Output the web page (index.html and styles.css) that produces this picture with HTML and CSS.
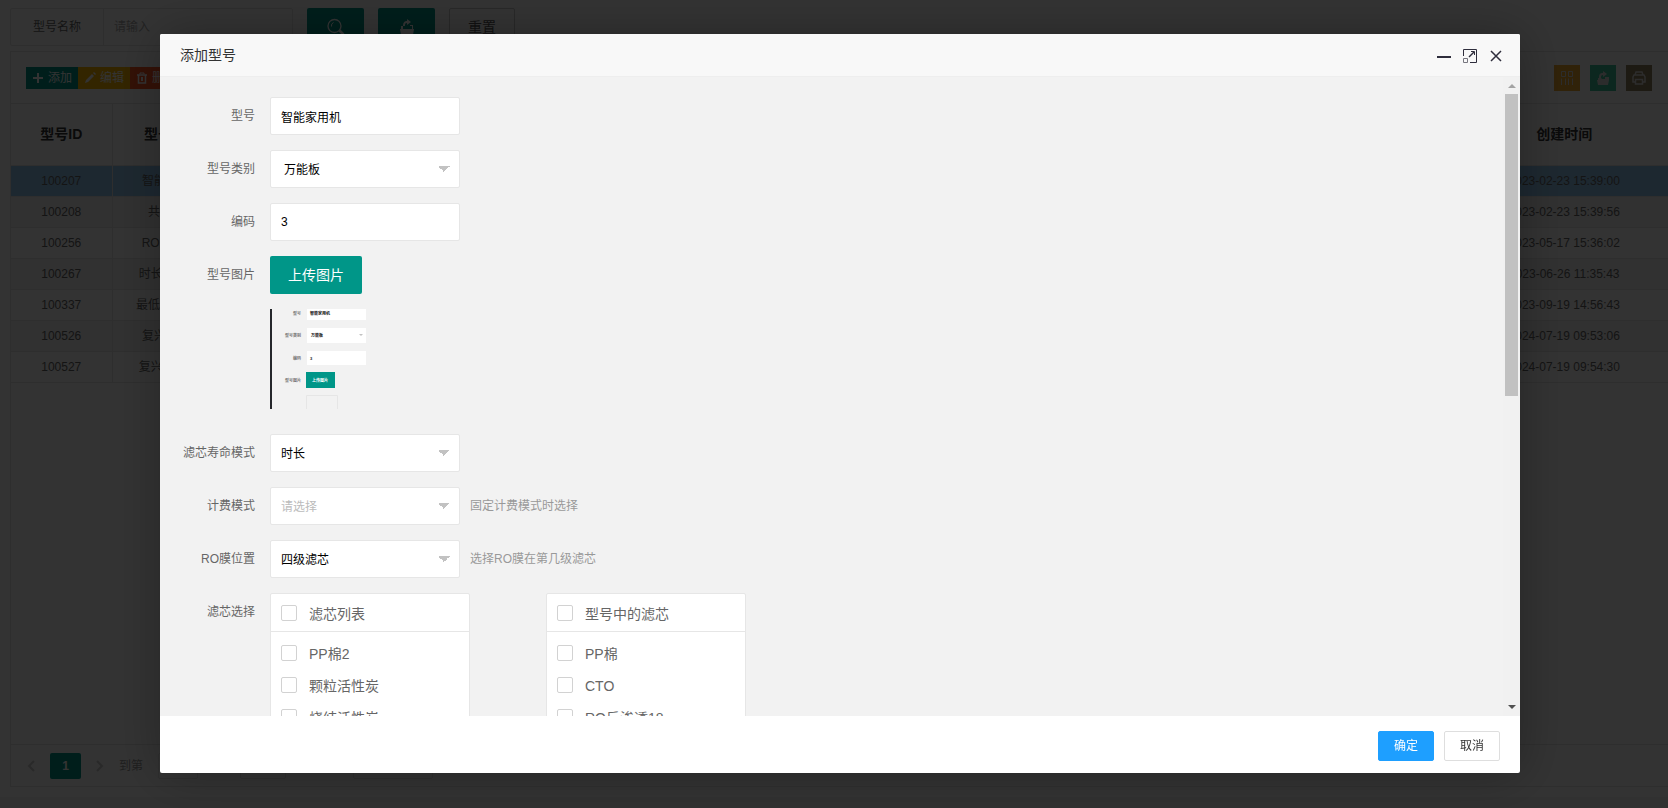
FILE: index.html
```
<!DOCTYPE html>
<html lang="zh-CN">
<head>
    <meta charset="UTF-8">
    <meta name="viewport" content="width=device-width, initial-scale=1.0">
    <title>添加型号</title>
    <link rel="stylesheet" href="styles.css">
</head>
<body>
    <div class="page">
        <form class="search">
            <div class="search-field">
                <label for="keyword">型号名称</label>
                <input type="text" id="keyword" placeholder="请输入">
            </div>
            <button type="button" class="btn" aria-label="搜索">
                <svg width="18" height="18" viewBox="0 0 18 18" fill="none" stroke="currentColor"><circle cx="7.500" cy="8" r="6.500" stroke-width="1.3"/><path d="M4.500 8.500a3.500 3.500 0 0 1 2-4"/><path d="M12.500 12.500l4 4" stroke-width="2.500"/></svg>
            </button>
            <button type="button" class="btn" aria-label="导出">
                <svg width="16" height="16" viewBox="0 0 16 16" fill="currentColor"><path d="M1 10h14l-1 6H2zM4 7c0-4 2-5 4-5V0l4 3-4 3V4C6 4 6 5 6 7zM2 7h2v3H2zM11 6h3v4h-1V7h-2z"/></svg>
            </button>
            <button type="reset" class="btn btn-plain">重置</button>
        </form>

        <div class="table-view">
            <div class="table-tool">
                <div class="tool-left">
                    <button class="btn-xs green"><svg width="12" height="12" viewBox="0 0 12 12" stroke="currentColor" stroke-width="2"><path d="M6 1v10M1 6h10"/></svg>添加</button>
                    <button class="btn-xs yellow"><svg width="12" height="12" viewBox="0 0 12 12" fill="currentColor"><path d="M1 11l1-3 6-6 2 2-6 6zM9 1l1-1 2 2-1 1z"/></svg>编辑</button>
                    <button class="btn-xs red"><svg width="12" height="12" viewBox="0 0 12 12" fill="none" stroke="currentColor"><path d="M4 2V1h4v1M5.500 5v4M6.500 5v4"/><path d="M1 3h10M2.500 3v8h7V3" stroke-width="1.500"/></svg>删除</button>
                </div>
                <div class="tool-right">
                    <button class="tool-icon orange" aria-label="筛选列"><svg width="14" height="14" viewBox="0 0 14 14" fill="none" stroke="currentColor"><path d="M1.500.5h4v5h-4zM8.500.5h4v5h-4zM1.500 7.500V14M5.500 7.500V14M8.500 7.500V14M12.500 7.500V14"/></svg></button>
                    <button class="tool-icon mint" aria-label="导出"><svg width="14" height="14" viewBox="0 0 14 14" fill="currentColor"><path d="M1 9h12l-1 5H2zM3 7c0-4 1-5 4-5V0l4 3-4 3V4C5 4 5 5 5 7zM2 7h3l1 1h3V6h4v3H2z"/></svg></button>
                    <button class="tool-icon brown" aria-label="打印"><svg width="14" height="14" viewBox="0 0 14 14" fill="none" stroke="currentColor" stroke-width="1.500"><path d="M3 4l1-3h6l1 3M3 11H1V6l1-2h10l1 2v5h-2M3.500 8.500h7v4.500h-7z"/></svg></button>
                </div>
            </div>
            <table>
                <colgroup><col class="col-id"><col class="col-name"><col><col class="col-time"></colgroup>
                <thead>
                    <tr><th>型号ID</th><th>型号名称</th><th></th><th>创建时间</th></tr>
                </thead>
                <tbody>
                    <tr class="active"><td>100207</td><td>智能家用机</td><td></td><td>2023-02-23 15:39:00</td></tr>
                    <tr><td>100208</td><td>共享机型</td><td></td><td>2023-02-23 15:39:56</td></tr>
                    <tr><td>100256</td><td>RO膜机型1</td><td></td><td>2023-05-17 15:36:02</td></tr>
                    <tr><td>100267</td><td>时长模式机1</td><td></td><td>2023-06-26 11:35:43</td></tr>
                    <tr><td>100337</td><td>最低消费机型</td><td></td><td>2023-09-19 14:56:43</td></tr>
                    <tr><td>100526</td><td>复兴家用机</td><td></td><td>2024-07-19 09:53:06</td></tr>
                    <tr><td>100527</td><td>复兴家用机1</td><td></td><td>2024-07-19 09:54:30</td></tr>
                </tbody>
            </table>
            <div class="pager">
                <button class="pager-arrow" aria-label="上一页"><svg width="8" height="12" viewBox="0 0 8 12" fill="none" stroke="currentColor" stroke-width="2"><path d="M7 1L2 6l5 5"/></svg></button>
                <button class="pager-current">1</button>
                <button class="pager-arrow" aria-label="下一页"><svg width="8" height="12" viewBox="0 0 8 12" fill="none" stroke="currentColor" stroke-width="2"><path d="M1 1l5 5-5 5"/></svg></button>
                <label for="page-no">到第</label>
                <input type="text" id="page-no" value="1">
                <span>页</span>
                <button class="pager-go">确定</button>
                <span>共 7 条</span>
                <select aria-label="每页条数"><option>10 条/页</option></select>
            </div>
        </div>
    </div>

    <div class="shade">
        <div class="dialog" role="dialog" aria-labelledby="dialog-title">
            <div class="dialog-title">
                <span id="dialog-title">添加型号</span>
                <div class="dialog-ctrl">
                    <button aria-label="最小化"><svg width="14" height="16" viewBox="0 0 14 16"><path d="M0 8h14v2H0z" fill="#2e2d3c"/></svg></button>
                    <button aria-label="最大化"><svg width="14" height="14" viewBox="0 0 14 14" fill="none" stroke="#2e2d3c"><path d="M.5 7V.5h13v13H7"/><path d="M6 8l5-5" stroke-width="1.500"/><path d="M8 2.500h3.500V6"/><path d="M.5 9.500h4v4h-4z" stroke="#77767f"/></svg></button>
                    <button aria-label="关闭"><svg width="14" height="14" viewBox="0 0 14 14" stroke="#2e2d3c" stroke-width="1.500"><path d="M2 2l10 10M12 2L2 12"/></svg></button>
                </div>
            </div>

            <div class="dialog-body">
                <form class="form">
                    <div class="form-item">
                        <label for="model">型号</label>
                        <input type="text" id="model" value="智能家用机">
                    </div>
                    <div class="form-item">
                        <label for="type">型号类别</label>
                        <select id="type" class="native"><option>万能板</option></select>
                    </div>
                    <div class="form-item">
                        <label for="code">编码</label>
                        <input type="text" id="code" value="3">
                    </div>
                    <div class="form-item">
                        <label for="upload">型号图片</label>
                        <div>
                            <button type="button" id="upload" class="btn">上传图片</button>
                            <svg class="preview" width="96" height="100" viewBox="0 0 96 100">
                                <path d="M0 0h2v100H0z" fill="#25272b"/>
                                <path d="M37 0h59v11H37zM37 19h59v15H37zM37 42h59v14H37z" fill="#fff"/>
                                <path d="M36 63h29v16H36z" fill="#009688"/>
                                <path d="M36.500 100V86.500h31V100" fill="none" stroke="#e6e6e6"/>
                                <path d="M89 25h4l-2 2z" fill="#c2c2c2"/>
                                <g class="preview-label"><text x="31" y="6">型号</text><text x="31" y="28">型号类别</text><text x="31" y="51">编码</text><text x="31" y="73">型号图片</text></g>
                                <g class="preview-value"><text x="40" y="6">智能家用机</text><text x="41" y="28">万能板</text><text x="40" y="51">3</text></g>
                                <text class="preview-btn" x="50" y="73">上传图片</text>
                            </svg>
                        </div>
                    </div>
                    <div class="form-item">
                        <label for="life">滤芯寿命模式</label>
                        <select id="life"><option>时长</option></select>
                    </div>
                    <div class="form-item">
                        <label for="billing">计费模式</label>
                        <select id="billing" class="empty"><option>请选择</option></select>
                        <span class="tip">固定计费模式时选择</span>
                    </div>
                    <div class="form-item">
                        <label for="position">RO膜位置</label>
                        <select id="position"><option>四级滤芯</option></select>
                        <span class="tip">选择RO膜在第几级滤芯</span>
                    </div>
                    <div class="form-item">
                        <span class="form-label">滤芯选择</span>
                        <div class="transfer">
                            <div class="transfer-box">
                                <label class="transfer-head"><input type="checkbox"><span>滤芯列表</span></label>
                                <div class="transfer-list">
                                    <label><input type="checkbox"><span>PP棉2</span></label>
                                    <label><input type="checkbox"><span>颗粒活性炭</span></label>
                                    <label><input type="checkbox"><span>烧结活性炭</span></label>
                                </div>
                            </div>
                            <div class="transfer-box">
                                <label class="transfer-head"><input type="checkbox"><span>型号中的滤芯</span></label>
                                <div class="transfer-list">
                                    <label><input type="checkbox"><span>PP棉</span></label>
                                    <label><input type="checkbox"><span>CTO</span></label>
                                    <label><input type="checkbox"><span>RO反渗透18</span></label>
                                </div>
                            </div>
                        </div>
                    </div>
                </form>
                <div class="scrollbar">
                    <span class="arrow-up"></span>
                    <span class="thumb"></span>
                    <span class="arrow-down"></span>
                </div>
            </div>

            <div class="dialog-footer">
                <button class="primary">确定</button>
                <button>取消</button>
            </div>
        </div>
    </div>
</body>
</html>
```
FILE: styles.css
```
* {
    box-sizing: border-box;
}

body {
    margin: 0;
    height: 100vh;
    overflow: hidden;
    background: #f2f2f2;
    color: #666;
    font: 12px/24px "Liberation Sans", "Noto Sans CJK SC", sans-serif;
}

button, input, select {
    font: inherit;
    margin: 0;
    border-radius: 2px;
}

button {
    display: inline-flex;
    align-items: center;
    justify-content: center;
    padding: 0;
    border: none;
    cursor: pointer;
}

input[type="text"], select {
    width: 190px;
    height: 38px;
    padding: 0 10px;
    border: 1px solid #e6e6e6;
    background: #fff;
    color: #000;
}

select {
    appearance: none;
}

/* list page */
.page {
    display: flex;
    flex-direction: column;
    height: calc(100vh - 11px);
    padding: 8px 0 10px 10px;
    background: #fff;
}

.search {
    display: flex;
    gap: 14px;
    margin-bottom: 5px;
}

.search-field {
    display: flex;
    width: 283px;
    border: 1px solid #e6e6e6;
    border-radius: 2px;
}

.search-field label {
    width: 94px;
    line-height: 36px;
    text-align: center;
    border-right: 1px solid #e6e6e6;
}

.search-field input[type="text"] {
    height: 36px;
    border: none;
}

input::placeholder {
    color: #aaa;
}

.btn {
    min-width: 57px;
    height: 38px;
    padding: 0 18px;
    background: #009688;
    color: #fff;
    font-size: 14px;
}

.btn-plain {
    border: 1px solid #c9c9c9;
    background: #fff;
    color: #555;
}

.table-view {
    display: flex;
    flex: 1;
    flex-direction: column;
    border: 1px solid #e6e6e6;
    border-right: none;
}

.table-tool {
    display: flex;
    justify-content: space-between;
    height: 51px;
    padding: 13px 16px 0 15px;
}

.tool-left {
    display: flex;
    padding-top: 2px;
}

.btn-xs {
    gap: 4px;
    width: 52px;
    height: 22px;
    border-radius: 0;
    color: #fff;
}

.green { background: #009688; }
.yellow { background: #ffb800; }
.red { background: #ff5722; }

.tool-right {
    display: flex;
    gap: 10px;
}

.tool-icon {
    width: 26px;
    height: 26px;
    border-radius: 0;
    color: #ddd;
}

.orange { background: #f0a830; }
.mint { background: #3fc09a; }
.brown { background: #90805f; }

table {
    width: 100%;
    table-layout: fixed;
    border-collapse: collapse;
}

.col-id { width: 101px; }
.col-name { width: 120px; }
.col-time { width: 208px; }

th, td {
    height: 31px;
    padding: 0;
    border: 1px solid #e6e6e6;
    border-width: 1px 0 1px 1px;
    text-align: center;
    white-space: nowrap;
}

th:first-child, td:first-child {
    border-left: none;
}

th {
    height: 62px;
    padding-bottom: 2px;
    font-size: 14px;
    font-weight: bold;
    color: #333;
}

tbody tr:nth-child(even) {
    background: #f2f2f2;
}

tbody tr.active {
    background: #93c8f0;
}

.pager {
    display: flex;
    align-items: center;
    gap: 15px;
    height: 42px;
    margin-top: auto;
    padding: 0 16px;
    border-top: 1px solid #e6e6e6;
    color: #999;
}

.pager-arrow {
    background: none;
    color: #ccc;
}

.pager-current {
    width: 31px;
    height: 26px;
    background: #009688;
    color: #fff;
    font-weight: bold;
}

.pager input[type="text"] {
    width: 40px;
    height: 26px;
}

.pager-go, .pager select {
    width: 46px;
    height: 26px;
    border: 1px solid #e6e6e6;
    background: #fff;
}

.pager select {
    width: 80px;
}

/* dialog */
.shade {
    position: fixed;
    inset: 0;
    padding: 34px 148px 35px 160px;
    background: rgba(0, 0, 0, 0.8);
}

.dialog {
    display: flex;
    flex-direction: column;
    height: 100%;
    border-radius: 2px;
    background: #fff;
    box-shadow: 1px 1px 50px rgba(0, 0, 0, 0.3);
}

.dialog-title {
    display: flex;
    align-items: center;
    justify-content: space-between;
    height: 43px;
    padding: 0 17px 0 20px;
    border-bottom: 1px solid #eee;
    border-radius: 2px 2px 0 0;
    background: #f8f8f8;
    color: #333;
    font-size: 14px;
}

.dialog-ctrl {
    display: flex;
    align-items: center;
    gap: 12px;
    padding-top: 2px;
}

.dialog-ctrl button {
    background: none;
}

.dialog-body {
    display: flex;
    flex: 1;
    min-height: 0;
    background: #f2f2f2;
}

.form {
    flex: 1;
    padding-top: 20px;
    overflow: hidden;
}

.form-item {
    display: flex;
    margin-bottom: 15px;
}

.form-item > label, .form-label {
    width: 110px;
    padding: 7px 15px;
    text-align: right;
}

/* drop-down arrow made of two half triangles */
.form select {
    padding-top: 2px;
    background-image: linear-gradient(to bottom right, #c2c2c2 50%, transparent 50%), linear-gradient(to bottom left, #c2c2c2 50%, transparent 50%);
    background-position: right 9px center, right 15px center;
    background-size: 6px 6px;
    background-repeat: no-repeat;
}

.form select.native {
    padding-left: 13px;
}

.form select.empty {
    color: #bbb;
}

.preview {
    display: block;
    margin: 15px 0 10px;
}

.preview text {
    font-size: 4px;
    font-weight: bold;
}

.preview-label {
    fill: #777;
    text-anchor: end;
}

.preview-value {
    fill: #111;
}

.preview .preview-btn {
    fill: #fff;
    text-anchor: middle;
}

.tip {
    padding: 7px 10px;
    color: #999;
}

.transfer {
    display: flex;
    gap: 76px;
}

.transfer-box {
    width: 200px;
    height: 360px;
    border: 1px solid #e6e6e6;
    border-radius: 2px;
    background: #fff;
    font-size: 14px;
}

.transfer-box label {
    display: flex;
    align-items: center;
    gap: 12px;
    height: 32px;
    padding: 0 10px;
}

.transfer-box .transfer-head {
    height: 38px;
    border-bottom: 1px solid #e6e6e6;
}

.transfer-box span {
    padding-top: 2px;
}

.transfer-list {
    padding: 5px 0;
}

.transfer-box input {
    appearance: none;
    width: 16px;
    height: 16px;
    border: 1px solid #d2d2d2;
    background: #fff;
}

.scrollbar {
    display: flex;
    flex-direction: column;
    align-items: center;
    width: 17px;
    background: #f1f1f1;
}

.arrow-up, .arrow-down {
    border: 4px solid transparent;
}

.arrow-up {
    margin: 3px 0 6px;
    border-bottom-color: #a3a3a3;
}

.arrow-down {
    margin: auto 0 3px;
    border-top-color: #505050;
}

.thumb {
    width: 13px;
    height: 302px;
    background: #c1c1c1;
}

.dialog-footer {
    display: flex;
    justify-content: flex-end;
    gap: 10px;
    padding: 15px 20px 12px;
}

.dialog-footer button {
    width: 56px;
    height: 30px;
    border: 1px solid #dedede;
    background: #fff;
    color: #333;
}

.dialog-footer .primary {
    border-color: #1e9fff;
    background: #1e9fff;
    color: #fff;
}
```
